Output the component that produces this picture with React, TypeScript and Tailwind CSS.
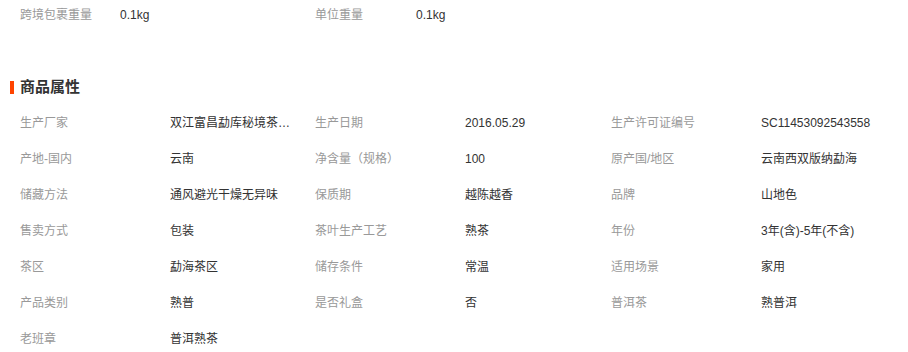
import React from 'react';

// 商品属性数据
const attrs: [string, string][] = [
  ['生产厂家', '双江富昌勐库秘境茶…'],
  ['生产日期', '2016.05.29'],
  ['生产许可证编号', 'SC11453092543558'],
  ['产地-国内', '云南'],
  ['净含量（规格）', '100'],
  ['原产国/地区', '云南西双版纳勐海'],
  ['储藏方法', '通风避光干燥无异味'],
  ['保质期', '越陈越香'],
  ['品牌', '山地色'],
  ['售卖方式', '包装'],
  ['茶叶生产工艺', '熟茶'],
  ['年份', '3年(含)-5年(不含)'],
  ['茶区', '勐海茶区'],
  ['储存条件', '常温'],
  ['适用场景', '家用'],
  ['产品类别', '熟普'],
  ['是否礼盒', '否'],
  ['普洱茶', '熟普洱'],
  ['老班章', '普洱熟茶'],
];

export default function App() {
  return (
    <div
      className="w-[908px] h-[352px] bg-white overflow-hidden text-[12px]"
      style={{ fontFamily: '"Liberation Sans", "Noto Sans CJK SC", sans-serif' }}
    >
      {/* 重量信息 */}
      <div className="flex h-[30px] items-center pl-5">
        <div className="w-[100px] text-[#999]">跨境包裹重量</div>
        <div className="w-[195px] text-[#333]">0.1kg</div>
        <div className="w-[101px] text-[#999]">单位重量</div>
        <div className="text-[#333]">0.1kg</div>
      </div>

      {/* 标题 */}
      <div className="mt-[47px] flex h-5 items-center">
        <div className="ml-[10px] h-[13px] w-[4px] bg-[#ff4400]" />
        <div className="ml-[6px] text-[15px] font-bold text-[#333]">商品属性</div>
      </div>

      {/* 属性列表 */}
      <div className="mt-[8px] grid grid-cols-[150px_145px_150px_146px_150px_1fr] pl-5">
        {attrs.map(([k, v]) => (
          <React.Fragment key={k}>
            <div className="flex h-9 items-center text-[#999]">{k}</div>
            <div className="flex h-9 items-center text-[#333]">{v}</div>
          </React.Fragment>
        ))}
      </div>
    </div>
  );
}
